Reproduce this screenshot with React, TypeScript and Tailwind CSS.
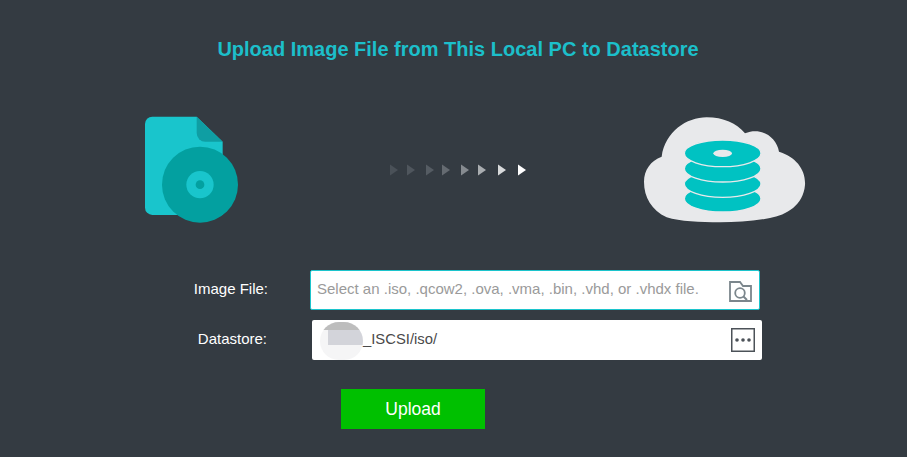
import React from 'react';

const arrows = [
  { x: 10, fill: '#4a5158' },
  { x: 27, fill: '#4f565d' },
  { x: 46, fill: '#555c63' },
  { x: 62, fill: '#656b71' },
  { x: 81, fill: '#868b90' },
  { x: 98, fill: '#a9adb0' },
  { x: 118, fill: '#d8dadb' },
  { x: 138, fill: '#ffffff' },
];

const FileDiscIcon = () => (
  <svg width="120" height="130" viewBox="0 0 360 390" className="shrink-0">
    <path d="M67 50H200L278 125V345H67a22 22 0 0 1-22-22V72a22 22 0 0 1 22-22Z" fill="#19c5cc" />
    <path d="M200 50L278 125H226a26 26 0 0 1-26-26Z" fill="#0f9ea3" />
    <circle cx="210" cy="254" r="114" fill="#03a0a0" />
    <circle cx="210" cy="254" r="41" fill="#19c5cc" />
    <circle cx="210" cy="254" r="13" fill="#03a0a0" />
  </svg>
);

const ArrowTrail = () => (
  <svg width="155" height="30" viewBox="0 0 155 30" className="mt-[55px] ml-[130px] shrink-0">
    {arrows.map((a) => (
      <path key={a.x} d={`M${a.x} 9.5L${a.x + 8} 15L${a.x} 20.5Z`} fill={a.fill} />
    ))}
  </svg>
);

const CloudDbIcon = () => (
  <svg width="190" height="120" viewBox="0 0 570 360" className="mt-[10px] ml-[95px] shrink-0">
    <path
      d="M110 322C65 300 42 262 42 215C42 180 62 152 95 140C105 65 170 22 230 22C280 22 320 40 345 70C395 50 440 82 447 125C498 140 528 180 525 225C520 285 470 315 420 324C370 334 320 337 270 337C210 337 150 335 110 322Z"
      fill="#e8e9eb"
    />
    {[266, 222, 176, 130].map((cy) => (
      <ellipse key={cy} cx="278" cy={cy} rx="115" ry="40" fill="#00c2c2" stroke="#e8e9eb" strokeWidth="4" />
    ))}
    <ellipse cx="278" cy="130" rx="28" ry="11" fill="#e8e9eb" />
  </svg>
);

const FolderSearchIcon = () => (
  <svg width="24" height="21" viewBox="0 0 24 21" fill="none" stroke="#7b868c" strokeWidth="1.8" className="mt-[2px]">
    <path d="M2 1H12L15 5H23V20H2Z" />
    <circle cx="12" cy="12" r="4.8" />
    <path d="M15.5 15.5L19 19" strokeWidth="2" />
  </svg>
);

const MoreIcon = () => (
  <svg width="24" height="24" viewBox="0 0 24 24">
    <rect x="0.75" y="0.75" width="22.5" height="22.5" fill="none" stroke="#4c5258" strokeWidth="1.5" />
    <circle cx="6" cy="12" r="1.8" fill="#4c5258" />
    <circle cx="12" cy="12" r="1.8" fill="#4c5258" />
    <circle cx="18" cy="12" r="1.8" fill="#4c5258" />
  </svg>
);

export default function App() {
  return (
    <div className="h-[457px] w-full overflow-hidden bg-[#343b42] font-['Liberation_Sans',Arial,sans-serif]">
      <h1 className="pt-[38px] pl-[9px] text-center text-[20px] leading-[22px] font-bold text-[#1cbfca]">
        Upload Image File from This Local PC to Datastore
      </h1>

      <div className="mt-[40px] flex items-start pl-[130px]">
        <FileDiscIcon />
        <ArrowTrail />
        <CloudDbIcon />
      </div>

      <div className="mt-[40px] flex items-center">
        <label className="w-[268px] pb-[2px] text-right text-[15px] text-white">Image File:</label>
        <div className="ml-[42px] flex h-[40px] w-[450px] items-center justify-between rounded-[2px] border border-[#1cc4cc] bg-white pr-[7px] pl-[6px]">
          <span className="pb-[2px] text-[15px] whitespace-nowrap text-[#9a9a9a]">
            Select an .iso, .qcow2, .ova, .vma, .bin, .vhd, or .vhdx file.
          </span>
          <FolderSearchIcon />
        </div>
      </div>

      <div className="mt-[10px] flex items-center">
        <label className="w-[267px] pb-[2px] text-right text-[15px] text-white">Datastore:</label>
        <div className="relative ml-[45px] flex h-[40px] w-[450px] items-center justify-between rounded-[2px] bg-white pr-[7px] pl-[51px]">
          <span className="pb-[2px] text-[14.8px] text-[#4a4a4a]">_ISCSI/iso/</span>
          <MoreIcon />
          <div className="absolute top-[2px] left-[8px] h-[38px] w-[43px] overflow-hidden rounded-full bg-[#f5f5f6]">
            <div className="h-[8px] bg-[#bdbdbd]" />
            <div className="ml-[8px] h-[15px] bg-[#d3d4da]" />
          </div>
        </div>
      </div>

      <button className="mt-[29px] ml-[341px] h-[40px] w-[144px] bg-[#00c000] text-[17.5px] text-white">Upload</button>
    </div>
  );
}
